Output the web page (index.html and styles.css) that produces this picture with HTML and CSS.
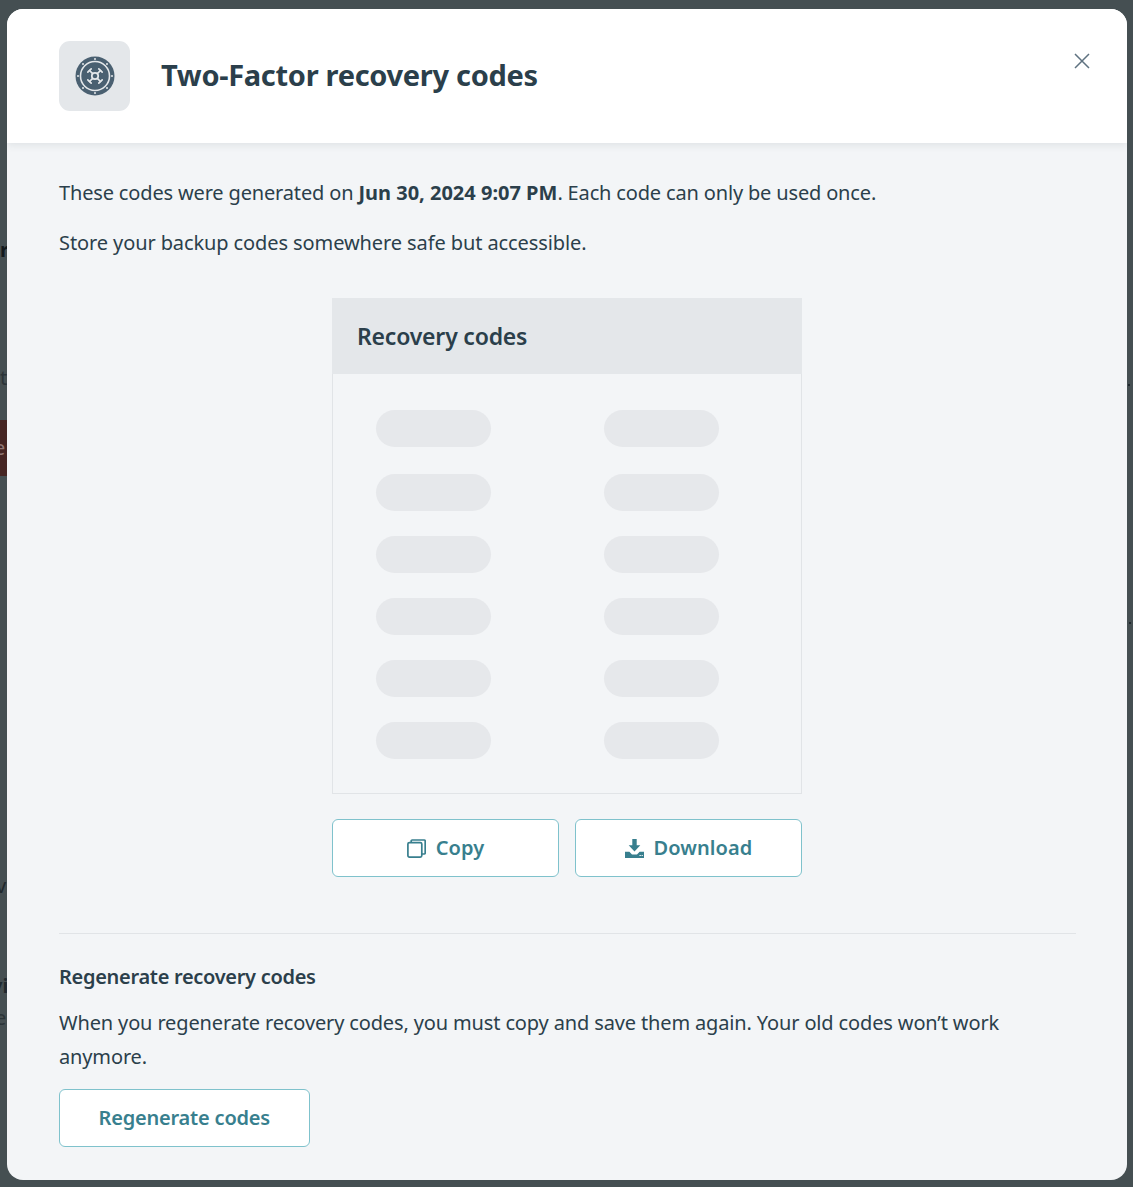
FILE: index.html
```html
<!DOCTYPE html>
<html lang="en">
<head>
    <meta charset="UTF-8">
    <meta name="viewport" content="width=device-width, initial-scale=1.0">
    <title>Two-Factor recovery codes</title>
    <link rel="stylesheet" href="styles.css">
</head>
<body>
    <!-- page behind the dimmed overlay, only its edges show -->
    <div class="behind">
        <span class="scrap scrap-r">r</span>
        <span class="scrap scrap-t">t</span>
        <span class="scrap scrap-btn">e</span>
        <span class="scrap scrap-v">v</span>
        <span class="scrap scrap-vi">vi</span>
        <span class="scrap scrap-e">e</span>
        <span class="scrap-dot dot-a"></span>
        <span class="scrap-dot dot-b"></span>
    </div>

    <div class="modal">
        <div class="modal-header">
            <div class="header-icon">
                <svg width="40" height="40" viewBox="0 0 40 40">
                    <circle cx="20" cy="20" r="19.5" fill="#4a6071"/>
                    <circle cx="20" cy="20" r="14.5" fill="none" stroke="#e4e7ea" stroke-width="1.6"/>
                    <g fill="#e4e7ea">
                        <circle cx="20" cy="3" r="1"/>
                        <circle cx="20" cy="37" r="1"/>
                        <circle cx="3" cy="20" r="1"/>
                        <circle cx="37" cy="20" r="1"/>
                        <circle cx="8" cy="8" r="1"/>
                        <circle cx="32" cy="8" r="1"/>
                        <circle cx="8" cy="32" r="1"/>
                        <circle cx="32" cy="32" r="1"/>
                    </g>
                    <g fill="none" stroke="#e4e7ea" stroke-width="1.7" stroke-linecap="round">
                        <circle cx="20" cy="20" r="3.2"/>
                        <path d="M17.7 17.7L14.5 14.5M22.3 17.7L25.5 14.5M17.7 22.3L14.5 25.5M22.3 22.3L25.5 25.5"/>
                        <path d="M12.8 16.2L16.2 12.8M23.8 12.8L27.2 16.2M12.8 23.8L16.2 27.2M23.8 27.2L27.2 23.8"/>
                    </g>
                </svg>
            </div>
            <h1>Two-Factor recovery codes</h1>
            <button class="close-btn" aria-label="Close">
                <svg width="16" height="16" viewBox="0 0 16 16">
                    <path d="M1 1L15 15M15 1L1 15" stroke="#5f7280" stroke-width="1.5" fill="none"/>
                </svg>
            </button>
        </div>

        <div class="modal-body">
            <p class="intro">These codes were generated on <b>Jun 30, 2024 9:07 PM</b>. Each code can only be used once.</p>
            <p class="intro intro-second">Store your backup codes somewhere safe but accessible.</p>

            <div class="codes-wrap">
                <div class="codes-card">
                    <div class="codes-title">Recovery codes</div>
                    <div class="codes-grid">
                        <span class="code-pill"></span><span class="code-pill"></span>
                        <span class="code-pill"></span><span class="code-pill"></span>
                        <span class="code-pill"></span><span class="code-pill"></span>
                        <span class="code-pill"></span><span class="code-pill"></span>
                        <span class="code-pill"></span><span class="code-pill"></span>
                        <span class="code-pill"></span><span class="code-pill"></span>
                    </div>
                </div>
                <div class="codes-actions">
                    <button class="btn">
                        <svg width="19" height="19" viewBox="0 0 19 19">
                            <path d="M4.2 3.6V2a1 1 0 0 1 1-1h12a1 1 0 0 1 1 1v12a1 1 0 0 1-1 1h-2.4" fill="none" stroke="#387f8e" stroke-width="1.7"/>
                            <rect x="0.9" y="3.6" width="13.9" height="14.5" rx="1.5" fill="none" stroke="#387f8e" stroke-width="1.7"/>
                        </svg>
                        <span class="btn-label">Copy</span>
                    </button>
                    <button class="btn">
                        <svg width="19" height="19" viewBox="0 0 19 19">
                            <path d="M7.3 0h4.4v6.2h3.6L9.5 12.4 3.7 6.2h3.6z" fill="#387f8e"/>
                            <path d="M0 12.8h4.4L7 15.6h5l2.6-2.8H19V19H0z" fill="#387f8e"/>
                            <path d="M14.5 16h1.3v1h-1.3zM16.6 16h1.2v1h-1.2z" fill="#fff"/>
                        </svg>
                        <span class="btn-label">Download</span>
                    </button>
                </div>
            </div>

            <div class="regen">
                <h2>Regenerate recovery codes</h2>
                <p>When you regenerate recovery codes, you must copy and save them again. Your old codes won’t work anymore.</p>
                <button class="btn btn-regen"><span class="btn-label">Regenerate codes</span></button>
            </div>
        </div>
    </div>
</body>
</html>
```

FILE: styles.css
```css
* {
    box-sizing: border-box;
}
html, body {
    height: 100%;
}
body {
    margin: 0;
    padding: 9px 6.25px 7px 7px;
    background-color: #454f52;
    font-family: "Noto Sans", Arial, sans-serif;
    color: #2b3f4b;
    overflow: hidden;
}

/* leftovers of the page under the overlay */
.behind {
    position: absolute;
    inset: 0;
    overflow: hidden;
}
.scrap {
    position: absolute;
    left: -6px;
    color: #20292e;
    font-size: 20px;
    line-height: 24px;
}
.scrap-r { top: 238px; left: 0; font-weight: bold; color: #12191d; }
.scrap-t { top: 366px; left: 0; color: #2b3438; }
.scrap-btn {
    top: 420px;
    left: 0;
    width: 7px;
    height: 56px;
    background-color: #452523;
    color: #8f7674;
    line-height: 56px;
    text-indent: -6px;
    overflow: hidden;
}
.scrap-v { top: 874px; left: -4px; }
.scrap-vi { top: 974px; left: -9px; font-weight: bold; }
.scrap-e { top: 1006px; left: -5px; color: #2b3438; }
.scrap-dot {
    position: absolute;
    left: 1128px;
    width: 2px;
    height: 2px;
    background-color: #20292e;
}
.dot-a { top: 384px; }
.dot-b { top: 622px; left: 1129px; }

.modal {
    position: relative;
    height: 100%;
    border-radius: 16px;
    background-color: #f3f5f7;
    overflow: hidden;
    display: flex;
    flex-direction: column;
}
.modal-header {
    position: relative;
    flex: none;
    height: 134px;
    padding: 32px 52px 0 52px;
    display: flex;
    align-items: flex-start;
    gap: 31px;
    background-color: white;
    box-shadow: 0 2px 8px rgba(40, 60, 70, 0.1);
}
.header-icon {
    width: 71px;
    height: 70px;
    border-radius: 11px;
    background-color: #e4e7ea;
    display: flex;
    align-items: center;
    justify-content: center;
}
h1 {
    margin: 0;
    font-size: 29px;
    line-height: 67px;
    font-weight: bold;
    letter-spacing: -0.3px;
}
.close-btn {
    position: absolute;
    top: 44px;
    right: 36.75px;
    padding: 0;
    border: none;
    background: none;
    line-height: 0;
    cursor: pointer;
}

.modal-body {
    flex: 1;
    padding: 34px 50.75px 0 52px;
}
.intro {
    margin: 0;
    font-size: 20px;
    line-height: 32px;
    letter-spacing: -0.16px;
}
.intro b {
    font-weight: bold;
    letter-spacing: 0;
}
.intro-second {
    margin-top: 18px;
    letter-spacing: -0.1px;
}

.codes-wrap {
    width: 470px;
    margin: 39px 0 0 273px;
}
.codes-card {
    height: 496px;
    border: 1px solid #e1e4e7;
    border-top: none;
}
.codes-title {
    height: 76px;
    margin: 0 -1px;
    padding-left: 25px;
    background-color: #e4e7ea;
    font-size: 23px;
    font-weight: 600;
    line-height: 76px;
    letter-spacing: -0.2px;
}
.codes-grid {
    display: grid;
    grid-template-columns: 115px 115px;
    column-gap: 113px;
    row-gap: 25px;
    padding: 36px 0 0 43px;
}
.code-pill {
    height: 37px;
    border-radius: 19px;
    background-color: #e6e8eb;
}
.code-pill:nth-child(-n+2) {
    margin-bottom: 2px;
}

.codes-actions {
    display: flex;
    gap: 16px;
    margin-top: 25px;
}
.btn {
    height: 58px;
    padding: 0 38.5px;
    border: 1px solid #7fc2cc;
    border-radius: 6px;
    background-color: white;
    color: #387f8e;
    font-family: inherit;
    font-size: 20px;
    font-weight: 600;
    letter-spacing: 0.1px;
    display: inline-flex;
    align-items: center;
    justify-content: center;
    gap: 10px;
    cursor: pointer;
}
.btn-label {
    margin-bottom: 2px;
}
.codes-actions .btn {
    flex: 1;
}
.btn-regen {
    letter-spacing: -0.2px;
}

.regen {
    margin-top: 56px;
    padding-top: 26px;
    border-top: 1px solid #e1e4e7;
}
h2 {
    margin: 0;
    font-size: 20px;
    line-height: 34px;
    font-weight: 600;
    letter-spacing: -0.3px;
}
.regen p {
    margin: 12px 0 15px;
    font-size: 20px;
    line-height: 34px;
    letter-spacing: -0.14px;
}
```
